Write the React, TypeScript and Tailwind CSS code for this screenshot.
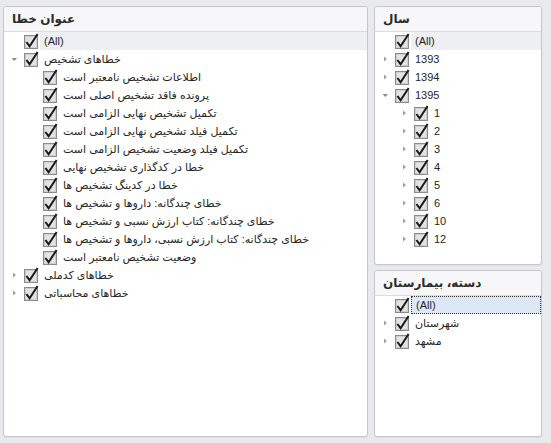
type Arrow = 'none' | 'right' | 'down';

interface Node {
  label: string;
  level: number;
  arrow: Arrow;
  mark?: 'hover' | 'focus';
}

const errorTree: Node[] = [
  { label: '(All)', level: 0, arrow: 'none', mark: 'hover' },
  { label: 'خطاهای تشخیص', level: 0, arrow: 'down' },
  { label: 'اطلاعات تشخیص نامعتبر است', level: 1, arrow: 'none' },
  { label: 'پرونده فاقد تشخیص اصلی است', level: 1, arrow: 'none' },
  { label: 'تکمیل تشخیص نهایی الزامی است', level: 1, arrow: 'none' },
  { label: 'تکمیل فیلد تشخیص نهایی الزامی است', level: 1, arrow: 'none' },
  { label: 'تکمیل فیلد وضعیت تشخیص الزامی است', level: 1, arrow: 'none' },
  { label: 'خطا در کدگذاری تشخیص نهایی', level: 1, arrow: 'none' },
  { label: 'خطا در کدینگ تشخیص ها', level: 1, arrow: 'none' },
  { label: 'خطای چندگانه: داروها و تشخیص ها', level: 1, arrow: 'none' },
  { label: 'خطای چندگانه: کتاب ارزش نسبی و تشخیص ها', level: 1, arrow: 'none' },
  { label: 'خطای چندگانه: کتاب ارزش نسبی، داروها و تشخیص ها', level: 1, arrow: 'none' },
  { label: 'وضعیت تشخیص نامعتبر است', level: 1, arrow: 'none' },
  { label: 'خطاهای کدملی', level: 0, arrow: 'right' },
  { label: 'خطاهای محاسباتی', level: 0, arrow: 'right' },
];

const yearTree: Node[] = [
  { label: '(All)', level: 0, arrow: 'none', mark: 'hover' },
  { label: '1393', level: 0, arrow: 'right' },
  { label: '1394', level: 0, arrow: 'right' },
  { label: '1395', level: 0, arrow: 'down' },
  ...['1', '2', '3', '4', '5', '6', '10', '12'].map((m) => ({ label: m, level: 1, arrow: 'right' as Arrow })),
];

const hospitalTree: Node[] = [
  { label: '(All)', level: 0, arrow: 'none', mark: 'focus' },
  { label: 'شهرستان', level: 0, arrow: 'right' },
  { label: 'مشهد', level: 0, arrow: 'right' },
];

function CheckBox() {
  return (
    <svg width="15" height="16" viewBox="0 0 15 16" className="shrink-0">
      <rect x="0.5" y="2.5" width="13" height="13" fill="#f2f2f2" stroke="#8a8b8c" />
      <rect x="1.5" y="3.5" width="11" height="11" fill="#e3e3e3" stroke="#cfcfcf" />
      <path d="M2.4 9 L5.6 13.2 L13.6 1" fill="none" stroke="#1a1a1a" strokeWidth="2" />
    </svg>
  );
}

function Expander({ arrow }: { arrow: Arrow }) {
  if (arrow === 'right')
    return (
      <svg width="16" height="18" viewBox="0 0 16 18">
        <path d="M5 6.5 L8 9 L5 11.5 Z" fill="#a2a2a2" />
      </svg>
    );
  if (arrow === 'down')
    return (
      <svg width="16" height="18" viewBox="0 0 16 18">
        <path d="M3.5 8 L9 8 L6.25 11 Z" fill="#8c8c8c" />
      </svg>
    );
  return <span className="w-[16px] shrink-0" />;
}

function Row({ node }: { node: Node }) {
  return (
    <div className="flex h-[18px] items-center" style={{ paddingLeft: 4 + node.level * 19 }}>
      <span className="flex w-[16px] shrink-0 items-center">
        <Expander arrow={node.arrow} />
      </span>
      <CheckBox />
      <span
        className={`ml-[1px] flex h-[18px] flex-1 items-center pl-[4px] ${
          node.mark === 'hover'
            ? 'bg-[#eeeff2]'
            : node.mark === 'focus'
              ? 'border border-dotted border-[#333] bg-[#dde8f6] pl-[3px]'
              : ''
        }`}
      >
        <span dir="auto" className="whitespace-nowrap">
          {node.label}
        </span>
      </span>
    </div>
  );
}

function Panel({ title, nodes, className }: { title: string; nodes: Node[]; className: string }) {
  return (
    <div
      className={`flex flex-col overflow-hidden rounded-[3px] border border-[#c6c7cb] bg-white shadow-[0_1px_1px_rgba(0,0,0,0.06)] ${className}`}
    >
      <div className="flex h-[25px] shrink-0 items-center border-b border-[#dcdde1] bg-[#f7f7f9] px-[8px]">
        <span dir="rtl" className="text-[12px] font-bold text-[#2b2b2b]">
          {title}
        </span>
      </div>
      <div className="flex flex-col">
        {nodes.map((n, i) => (
          <Row key={i} node={n} />
        ))}
      </div>
    </div>
  );
}

export default function App() {
  return (
    <div
      className="flex h-[443px] w-[551px] gap-[6px] bg-[#e9eaee] pl-[3px] pt-[6px] text-[11px] text-[#262626]"
      style={{ fontFamily: '"Liberation Sans", "DejaVu Sans", sans-serif' }}
    >
      <Panel title="عنوان خطا" nodes={errorTree} className="h-[431px] w-[365px]" />
      <div className="flex w-[168px] flex-col gap-[5px]">
        <Panel title="سال" nodes={yearTree} className="h-[259px]" />
        <Panel title="دسته، بیمارستان" nodes={hospitalTree} className="h-[167px]" />
      </div>
    </div>
  );
}
